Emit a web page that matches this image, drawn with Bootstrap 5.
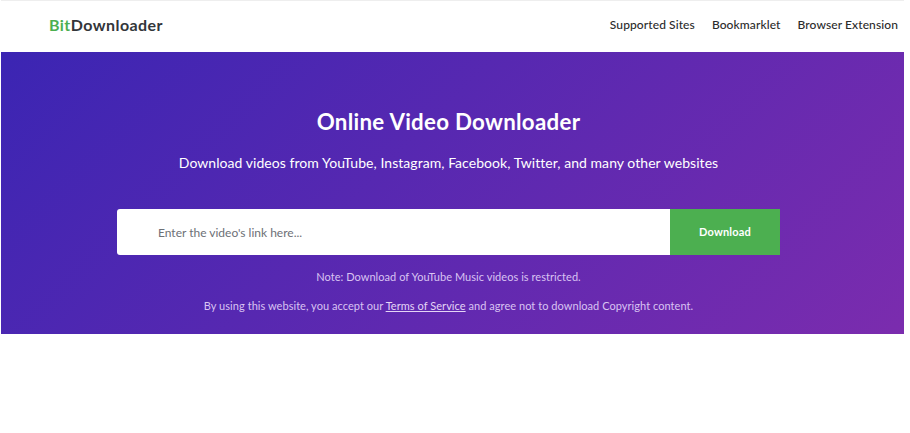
<!DOCTYPE html>
<html lang="en">
<head>
<meta charset="utf-8">
<title>BitDownloader</title>
<link href="https://cdn.jsdelivr.net/npm/bootstrap@5.3.0/dist/css/bootstrap.min.css" rel="stylesheet">
<style>
html,body{height:100%}
body{font-family:"Lato","Liberation Sans",sans-serif;background:#fff;color:#2b2b2b;overflow:hidden}
.page-wrap{width:903px;margin-left:1px;border-top:1px solid #eee}
.top-bar{height:51px;padding:0 6px 3px 48px}
.brand-name{font-size:16px;font-weight:700;letter-spacing:.44px;color:#33363a;text-decoration:none}
.brand-name span{color:#4caf50}
.top-links{gap:17px}
.top-links a{font-size:12px;font-weight:500;letter-spacing:.1px;color:#2b2b2b;text-decoration:none}
.hero-panel{height:282px;background:linear-gradient(135deg,#3b25b3 0%,#7b2cae 100%);color:#fff;padding:54px 8px 0 0}
.hero-title{font-size:22.3px;font-weight:700;letter-spacing:.28px;line-height:32px;margin:0 0 15px}
.hero-sub{font-size:14px;line-height:20px;margin:0 0 36px;letter-spacing:.05px}
.link-form{width:663px;height:46px;margin-left:116px}
.link-input{flex:1;border:0;border-radius:3px 0 0 3px;padding:0 41px;font:12px "Lato",sans-serif;outline:0;color:#555}
.link-input::placeholder{color:#6d7076;opacity:1}
.go-btn{width:110px;border:0;border-radius:0;background:#4caf50;color:#fff;font-size:11px;font-weight:700;letter-spacing:.2px}
.go-btn:hover{background:#4caf50;color:#fff}
.note-line{font-size:11px;line-height:16px;color:#d9c3f2;letter-spacing:.05px;margin:0}
.note-one{margin-top:14px}
.note-two{margin-top:13px}
.note-line a{color:#e4d5f6}
</style>
</head>
<body>
<div class="page-wrap">
<nav class="top-bar d-flex align-items-center justify-content-between">
<a class="brand-name" href="#"><span>Bit</span>Downloader</a>
<div class="top-links d-flex">
<a href="#">Supported Sites</a>
<a href="#">Bookmarklet</a>
<a href="#">Browser Extension</a>
</div>
</nav>
<section class="hero-panel text-center">
<h1 class="hero-title">Online Video Downloader</h1>
<p class="hero-sub">Download videos from YouTube, Instagram, Facebook, Twitter, and many other websites</p>
<form class="link-form d-flex" onsubmit="return false">
<input class="link-input" type="text" placeholder="Enter the video's link here...">
<button class="btn go-btn" type="submit">Download</button>
</form>
<p class="note-line note-one">Note: Download of YouTube Music videos is restricted.</p>
<p class="note-line note-two">By using this website, you accept our <a href="#">Terms of Service</a> and agree not to download Copyright content.</p>
</section>
</div>
<script src="https://cdn.jsdelivr.net/npm/bootstrap@5.3.0/dist/js/bootstrap.bundle.min.js"></script>
</body>
</html>
